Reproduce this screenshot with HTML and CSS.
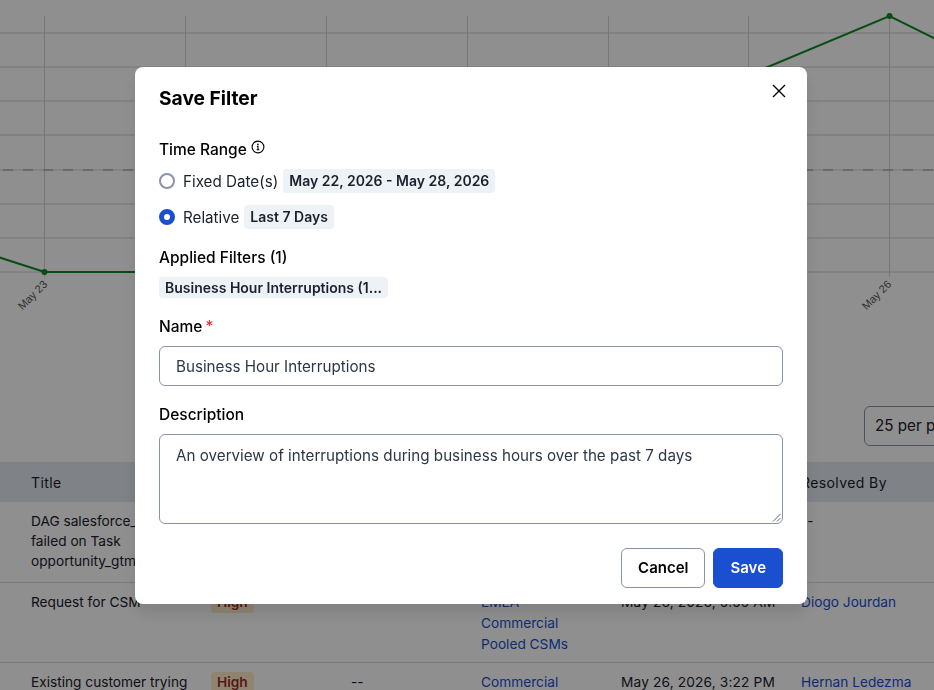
FILE: index.html
```html
<!DOCTYPE html>
<html lang="en">
<head>
	<meta charset="UTF-8">
	<title>Save Filter</title>
	<link rel="stylesheet" href="styles.css">
</head>
<body>
	<main class="page">
		<svg class="chart" width="934" height="406" viewBox="0 0 934 406">
			<g class="grid">
				<line x1="0" y1="33" x2="934" y2="33"/>
				<line x1="0" y1="67" x2="934" y2="67"/>
				<line x1="0" y1="101" x2="934" y2="101"/>
				<line x1="0" y1="135" x2="934" y2="135"/>
				<line x1="0" y1="170" x2="934" y2="170"/>
				<line x1="0" y1="204" x2="934" y2="204"/>
				<line x1="0" y1="238" x2="934" y2="238"/>
				<line x1="0" y1="272" x2="934" y2="272"/>
			</g>
			<g class="grid-v">
				<line x1="44.5" y1="16" x2="44.5" y2="277"/>
				<line x1="185.5" y1="16" x2="185.5" y2="277"/>
				<line x1="326.5" y1="16" x2="326.5" y2="277"/>
				<line x1="467.5" y1="16" x2="467.5" y2="277"/>
				<line x1="608.5" y1="16" x2="608.5" y2="277"/>
				<line x1="748.5" y1="16" x2="748.5" y2="277"/>
				<line x1="889.5" y1="16" x2="889.5" y2="277"/>
			</g>
			<line class="avg" x1="3" y1="170" x2="934" y2="170"/>
			<polyline class="series" points="-30,248 44.5,272 185.5,272 326.5,272 467.5,160 748.5,75 889.5,16 960,51"/>
			<circle class="dot" cx="44.5" cy="272" r="3"/>
			<circle class="dot" cx="889.5" cy="16" r="3"/>
			<text class="tick" transform="translate(48 285) rotate(-45)" text-anchor="end">May 23</text>
			<text class="tick" transform="translate(892 285) rotate(-45)" text-anchor="end">May 26</text>
		</svg>

		<div class="pager">
			<div class="per-page">25 per page</div>
		</div>

		<table class="incidents">
			<colgroup>
				<col class="col-title"><col class="col-severity"><col class="col-team"><col class="col-group"><col class="col-date"><col class="col-user">
			</colgroup>
			<thead>
				<tr>
					<th>Title</th><th>Severity</th><th>Team</th><th>Group</th><th>Created</th><th>Resolved By</th>
				</tr>
			</thead>
			<tbody>
				<tr>
					<td>DAG salesforce_sync<br>failed on Task<br>opportunity_gtm</td>
					<td><span class="sev">High</span></td>
					<td>--</td>
					<td><a>Data</a></td>
					<td class="date">May 26, 2026, 9:10 AM</td>
					<td>--</td>
				</tr>
				<tr>
					<td>Request for CSM</td>
					<td><span class="sev">High</span></td>
					<td></td>
					<td><a>EMEA<br>Commercial<br>Pooled CSMs</a></td>
					<td class="date">May 26, 2026, 5:55 AM</td>
					<td><a>Diogo Jourdan</a></td>
				</tr>
				<tr>
					<td>Existing customer trying</td>
					<td><span class="sev">High</span></td>
					<td>--</td>
					<td><a>Commercial</a></td>
					<td class="date">May 26, 2026, 3:22 PM</td>
					<td><a>Hernan Ledezma</a></td>
				</tr>
			</tbody>
		</table>
	</main>

	<div class="overlay">
		<section class="modal">
			<header class="modal-head">
				<h2 class="modal-title">Save Filter</h2>
				<svg class="close" width="14" height="14" viewBox="0 0 14 14"><path d="M1 1l12 12M13 1L1 13"/></svg>
			</header>

			<div class="field-label">
				Time Range
				<svg class="info" width="14" height="14" viewBox="0 0 14 14">
					<circle cx="7" cy="7" r="5.9"/>
					<path d="M5.9 6.4H7v3.2M5.6 9.7h2.8"/>
					<circle class="info-dot" cx="6.9" cy="4.3" r=".85"/>
				</svg>
			</div>
			<div class="radio-row">
				<i class="radio"></i>
				<span>Fixed Date(s)</span>
				<span class="tag">May 22, 2026 - May 28, 2026</span>
			</div>
			<div class="radio-row">
				<i class="radio on"></i>
				<span>Relative</span>
				<span class="tag">Last 7 Days</span>
			</div>

			<div class="field-label applied">Applied Filters (1)</div>
			<span class="tag tag-filter">Business Hour Interruptions (1...</span>

			<div class="field-label name">Name <b class="req">*</b></div>
			<div class="input">Business Hour Interruptions</div>

			<div class="field-label desc">Description</div>
			<div class="textarea">
				An overview of interruptions during business hours over the past 7 days
				<svg class="grip" width="9" height="9" viewBox="0 0 9 9"><path d="M8.5 1L1 8.5M8.5 5L5 8.5"/></svg>
			</div>

			<footer class="modal-foot">
				<button class="btn">Cancel</button>
				<button class="btn btn-primary">Save</button>
			</footer>
		</section>
	</div>
</body>
</html>
```

FILE: styles.css
```css
html,body{
	margin: 0;
	width: 100%;
	height: 100%;
	overflow: hidden;
}
body{
	font-family: Inter, "Liberation Sans", sans-serif;
	font-size: 13.7px;
	color: #1a202c;
	background-color: #fff;
}
.page{
	height: 690px;
	overflow: hidden;
}

/* chart */
.chart{
	display: block;
}
.grid line{
	stroke: #e0e0e0;
	stroke-width: 1.5;
}
.grid-v line{
	stroke: #d2d2d2;
	stroke-width: 1;
}
.avg{
	stroke: #b0b0b0;
	stroke-width: 1.5;
	stroke-dasharray: 10 10;
}
.series{
	fill: none;
	stroke: #0d8a24;
	stroke-width: 2;
}
.dot{
	fill: #0d8a24;
}
.tick{
	font-family: "Liberation Sans", sans-serif;
	font-size: 11px;
	fill: #555;
}

/* pager */
.pager{
	display: flex;
	height: 56px;
	padding-left: 864px;
}
.per-page{
	flex: none;
	box-sizing: border-box;
	width: 130px;
	height: 40px;
	padding: 0 10px;
	font-size: 15.2px;
	line-height: 38px;
	white-space: nowrap;
	border: 1px solid #8794ab;
	border-radius: 6px;
}

/* table */
.incidents{
	width: 934px;
	table-layout: fixed;
	border-collapse: collapse;
}
.col-title{width: 211px;}
.col-severity{width: 140px;}
.col-team{width: 130px;}
.col-group{width: 140px;}
.col-date{width: 180px;}
.incidents th{
	height: 40px;
	padding: 0 0 0 31px;
	font-size: 14px;
	font-weight: 400;
	letter-spacing: .4px;
	text-align: left;
	background-color: #e2e8f0;
}
.incidents th:nth-child(n+2),.incidents td:nth-child(n+2){
	padding-left: 0;
}
.incidents td{
	box-sizing: border-box;
	height: 80px;
	padding: 9px 0 0 31px;
	line-height: 20px;
	vertical-align: top;
	border-bottom: 1px solid #d5dcea;
}
.incidents .date{
	letter-spacing: .15px;
}
.incidents a{
	color: #1a4fd0;
	line-height: 21px;
}
.sev{
	display: inline-block;
	padding: 0 6px;
	font-weight: 600;
	line-height: 21px;
	color: #9b2c2c;
	background-color: #feebc8;
	border-radius: 4px;
}

/* modal */
.overlay{
	position: fixed;
	top: 0;
	left: 0;
	width: 100%;
	height: 100%;
	background-color: rgba(0,0,0,.44);
}
.modal{
	position: absolute;
	top: 67px;
	left: 135px;
	box-sizing: border-box;
	width: 672px;
	height: 537px;
	padding: 0 24px;
	color: #000;
	background-color: #fff;
	border-radius: 8px;
	box-shadow: 0 10px 15px rgba(0,0,0,.1);
}
.modal-head{
	display: flex;
	justify-content: space-between;
	height: 62px;
}
.modal-title{
	margin: 19px 0 0;
	font-size: 19.2px;
	font-weight: 700;
	line-height: 24px;
}
.close{
	margin: 17px 0 0;
	position: relative;
	left: 3px;
}
.close path{
	fill: none;
	stroke: #000;
	stroke-width: 1.4;
}
.field-label{
	display: flex;
	align-items: flex-start;
	gap: 4px;
	font-size: 15.5px;
	font-weight: 500;
	line-height: 24px;
	color: #000;
	margin-top: 9px;
}
.info{
	margin-top: 2px;
}
.info circle,.info path{
	fill: none;
	stroke: #000;
	stroke-width: 1.1;
}
.info .info-dot{
	fill: #000;
	stroke: none;
}
.radio-row{
	display: flex;
	align-items: center;
	height: 24px;
	margin-top: 7px;
	font-size: 15.2px;
	color: #1a202c;
}
.radio-row + .radio-row{
	margin-top: 12px;
}
.radio{
	box-sizing: border-box;
	width: 16px;
	height: 16px;
	margin-right: 8px;
	border: 2px solid #8794ab;
	border-radius: 50%;
}
.radio.on{
	border: 5px solid #1a4fd0;
}
.tag{
	margin-left: 5px;
	padding: 0 6px;
	font-size: 14px;
	font-weight: 600;
	line-height: 24px;
	color: #1a202c;
	background-color: #edf2f7;
	border-radius: 4px;
}
.applied{
	margin-top: 17px;
}
.tag-filter{
	display: inline-block;
	margin: 7px 0 0;
	line-height: 21px;
}
.name{
	margin-top: 17px;
}
.req{
	margin-left: -1px;
	font-weight: 400;
	color: #e02020;
}
.input,.textarea{
	box-sizing: border-box;
	margin-top: 7px;
	padding: 0 16px;
	font-size: 15.2px;
	color: #2d3748;
	border: 1px solid #8794ab;
	border-radius: 6px;
}
.input{
	height: 40px;
	line-height: 39px;
}
.desc{
	margin-top: 17px;
}
.textarea{
	position: relative;
	height: 90px;
	padding-top: 9px;
	line-height: 24px;
}
.grip{
	position: absolute;
	right: 1px;
	bottom: 1px;
}
.grip path{
	fill: none;
	stroke: #666;
	stroke-width: 1;
}
.modal-foot{
	display: flex;
	justify-content: flex-end;
	gap: 8px;
	margin-top: 24px;
}
.btn{
	height: 40px;
	padding: 0 16px 2px;
	font-family: inherit;
	font-size: 15px;
	font-weight: 600;
	color: #000;
	background-color: #fff;
	border: 1px solid #8794ab;
	border-radius: 6px;
}
.btn-primary{
	color: #fff;
	background-color: #1a4fd0;
	border-color: #1a4fd0;
}
```
